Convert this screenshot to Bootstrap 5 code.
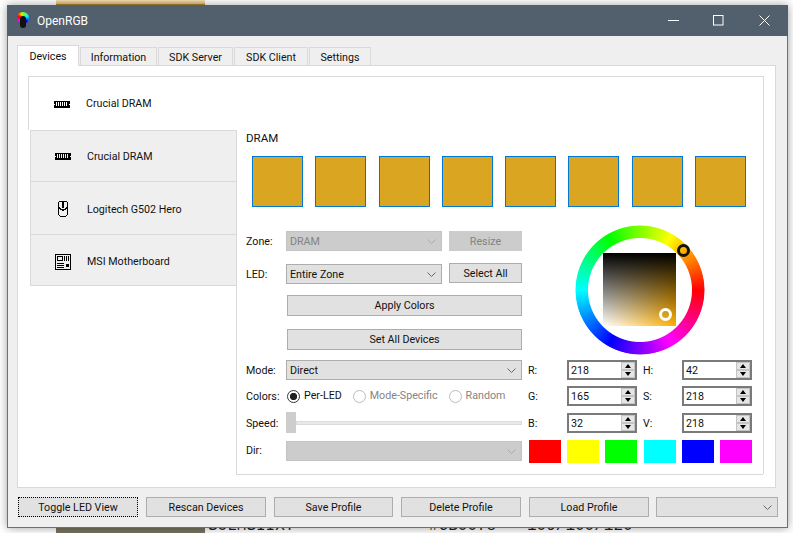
<!DOCTYPE html>
<html lang="en">
<head>
<meta charset="utf-8">
<title>OpenRGB</title>
<link href="https://cdn.jsdelivr.net/npm/bootstrap@5.3.0/dist/css/bootstrap.min.css" rel="stylesheet">
<style>
html,body{margin:0;height:100%;background:#fff;overflow:hidden}
body{font-family:Roboto,"Open Sans",sans-serif;font-size:10.7px;line-height:16px;color:#111}
.desk{position:relative;width:793px;height:533px;overflow:hidden;background:#fff}
.strip-top{position:absolute;left:56px;top:0;width:149px;height:5px;background:linear-gradient(#f6e3bd,#eac27a 70%,#97700f)}
.strip-bot{position:absolute;left:56px;top:527px;width:149px;height:6px;background:#77735f}
.behind{position:absolute;top:517px;font-family:"Liberation Mono",monospace;font-size:16px;line-height:18px;color:#222;white-space:nowrap}
.appwin{position:absolute;left:7px;top:5px;width:781px;height:523px;background:#efefef;border:1px solid #66727e;border-top:0;box-shadow:0 0 9px rgba(0,0,0,.38)}
.tbar{height:31px;background:#525f6d;color:#fff;font-size:12px;padding-left:9px;padding-right:1px;margin:0 -1px 0 -1px}
.logo{width:14px;height:17px;position:relative;margin-right:7px}
.logo-wheel{display:block;width:12px;height:12px;border-radius:50%;margin:0 1px;background:conic-gradient(#8f0 0,#0ff 70deg,#00f 130deg,#222 180deg,#f0f 230deg,#f00 290deg,#fd0 340deg,#8f0)}
.logo-dot{position:absolute;left:4px;top:4px;width:6px;height:12px;border-radius:3px;background:#111}
.wbtn{width:45px;height:31px}
.wbtn:last-child{width:46px}
.wbtn svg{display:block}
.appbody{padding:9px 11px 0 9px}
.tabrow{height:20px;flex-wrap:nowrap;border:0;gap:1px;position:relative;z-index:1;align-items:flex-end}
.tabrow .nav-link{height:18px;padding:0;border:1px solid #d9d9d9;border-bottom:0;border-radius:0;background:#efefef;color:#111;font-size:10.7px;line-height:20px;text-align:center;margin:0}
.tabrow .nav-link.active{height:21px;margin-bottom:-1px;background:#fff;color:#111;border-color:#d9d9d9;line-height:21px}
.t1{width:62px}.t2{width:77px}.t3{width:75px}.t4{width:74px}.t5{width:62px}
.pane{height:423px;width:759px;background:#fff;border:1px solid #d9d9d9;padding:10px 11px 0 10px}
.frame{width:736px;height:398px;border-top:1px solid #d9d9d9}
.devlist{width:208px;flex:none}
.dev{display:flex;align-items:center;background:#efefef;border:1px solid #d9d9d9;border-top:0;border-right:0;margin-left:2px;padding-left:24px}
.dev.on{background:#fff;border:0;border-left:1px solid #d9d9d9;margin-left:0;height:53px;padding-left:25px}
.d2{height:52px;border-top:1px solid #d9d9d9}
.d3{height:53px;padding-top:2px}
.d4{height:51px;padding-top:3px}
.dev svg{flex:none;width:16px;height:16px;shape-rendering:crispEdges}
.devname{margin-left:16px;white-space:nowrap;line-height:18px;padding-top:1px}
.mainc{width:528px;flex:none;padding-top:53px;border-right:1px solid #d9d9d9}
.zpanel{height:345px;border-left:1px solid #d9d9d9;border-bottom:1px solid #d9d9d9;padding:0 10px 0 9px}
.zlabel{height:26px;line-height:16px;font-size:11.5px}
.ledrow{display:flex;justify-content:space-between;padding:0 0 0 6px;height:51px;width:500px}
.ledbox{width:51px;height:51px;background:#daa520;border:1px solid #0078d7}
.upper{margin-top:24px;height:129px}
.ctlgrid{display:grid;grid-template-columns:40px 156px 80px;grid-template-rows:33px 31px 34px 21px;align-items:start;width:276px}
.ctlgrid .wd{margin-left:7px}
.sel.form-select{height:20px;min-height:0;padding:2px 0 0 3px;border:1px solid #adadad;border-radius:0;background-color:#e1e1e1;font-size:10.7px;line-height:16px;color:#111;background-size:9px 5px;background-position:right 5px center;background-image:url("data:image/svg+xml,%3Csvg xmlns='http://www.w3.org/2000/svg' viewBox='0 0 9 5'%3E%3Cpath d='M.5.5l4 4 4-4' fill='none' stroke='%23666'/%3E%3C/svg%3E")}
.sel.form-select:disabled{background-color:#ccc;color:#838383;border-color:#c4c4c4;opacity:1;background-image:url("data:image/svg+xml,%3Csvg xmlns='http://www.w3.org/2000/svg' viewBox='0 0 9 5'%3E%3Cpath d='M.5.5l4 4 4-4' fill='none' stroke='%23aaa'/%3E%3C/svg%3E")}
.wb.btn{height:21px;padding:1px 0 0;border:1px solid #adadad;border-radius:0;background:#e1e1e1;color:#111;font-size:10.7px;line-height:18px;--bs-btn-disabled-opacity:1}
.wb.btn:disabled{background:#ccc;color:#838383;border-color:#ccc}
.wb.foc{border:1px dotted #000}
.wb.h20{height:20px;line-height:17px}
.wb.ap{grid-column:2/4;margin-left:1px}
.lb{line-height:22px}
.up1{margin-top:-1px}
.wheelbox{position:relative;width:130px;height:130px;margin-left:53px;margin-top:-6px;flex:none}
.wring{position:absolute;inset:0;border-radius:50%;background:conic-gradient(from 90deg,#f00,#f0f,#00f,#0ff,#0f0,#ff0,#f00);-webkit-mask:radial-gradient(circle,transparent 51.5px,#000 52.5px,#000 64px,transparent 65px);mask:radial-gradient(circle,transparent 51.5px,#000 52.5px,#000 64px,transparent 65px)}
.wsq{position:absolute;left:28px;top:28px;width:73px;height:73px;background:linear-gradient(to bottom,#000,rgba(0,0,0,0)),linear-gradient(to right,#fff,#ffb000)}
.hd{position:absolute;width:13px;height:13px;border-radius:50%;border:3px solid #111}
.hd1{left:102px;top:19px}
.hd2{left:84px;top:83px;border-color:#fff}
.lower{display:grid;grid-template-columns:40px 236px 45px 70px 45px 70px;grid-template-rows:26px 27px 27px 23px;align-items:start;width:506px}
.rgbl{padding-left:6px;line-height:22px}
.spin{display:flex;height:20px;border:2px solid #7a7a7a;background:#fff}
.spin input{flex:1;width:0;border:0;padding:2px 0 0 2px;font:inherit;color:#111;background:transparent;outline:0}
.spbtns{width:14px;display:flex;flex-direction:column;gap:0}
.spb{flex:1;background:#e6e6e6;border:1px solid #c4c4c4;display:flex;align-items:center;justify-content:center}
.up{width:0;height:0;border:3.5px solid transparent;border-top:0;border-bottom:4px solid #000}
.dn{width:0;height:0;border:3.5px solid transparent;border-bottom:0;border-top:4px solid #000}
.form-check-input.rad{width:13px;height:13px;margin:0;flex:none;border:1px solid #333;background:#fff;opacity:1;box-shadow:none}
.form-check-input.rad:checked{background:radial-gradient(circle,#222 3.3px,#fff 4px);border-color:#333}
.form-check-input.rad:disabled{border-color:#bbb;opacity:1}
.radrow{height:20px;padding-left:1px}
.rl{margin:0 11px 0 4px;white-space:nowrap;line-height:18px}
.rl.dis{color:#848484}
.sliderrow{height:21px;margin-top:-1px}
.track{flex:1;height:4px;background:#e9e9e9;border:1px solid #dcdcdc}
.thumb{width:10px;height:21px;background:#cdcdcd;flex:none}
.dirsel{margin-top:1px}
.swatches{grid-column:3/7;display:flex;justify-content:space-between;padding-left:7px;height:23px}
.sw{height:23px;width:32px}
.sw-r{background:#f00}.sw-y{background:#ff0}.sw-g{background:#0f0}.sw-c{background:#0ff}.sw-b{background:#00f}.sw-m{background:#f0f}
.foot{margin-top:9px;height:21px;width:760px;gap:8px;padding-left:1px}
.foot .wb.btn{width:120px;height:20px;line-height:17px;flex:none}
.foot .wb.btn.nar{width:119px}
.foot .sel.form-select{width:122px;margin-left:-1px;flex:none}
.b1{left:208px}.b2{left:429px}.b3{left:527px}
</style>
</head>
<body>
<div class="desk">
  <div class="strip-top"></div>
  <div class="strip-bot"></div>
  <div class="behind b1">SOLMSIIXY</div>
  <div class="behind b2">#6B0078</div>
  <div class="behind b3">109/100/120</div>

  <div class="appwin">
    <div class="tbar d-flex align-items-center">
      <div class="logo"><span class="logo-wheel"></span><span class="logo-dot"></span></div>
      <span class="flex-grow-1">OpenRGB</span>
      <div class="wbtn d-flex align-items-center justify-content-center"><svg width="11" height="11" viewBox="0 0 11 11"><path d="M0 5.500h11" stroke="#fff" fill="none"/></svg></div>
      <div class="wbtn d-flex align-items-center justify-content-center"><svg width="11" height="11" viewBox="0 0 11 11"><rect x=".5" y=".5" width="9.500" height="9.500" stroke="#fff" fill="none"/></svg></div>
      <div class="wbtn d-flex align-items-center justify-content-center"><svg width="11" height="11" viewBox="0 0 11 11"><path d="M.5.5l10 10M10.500.5l-10 10" stroke="#fff" fill="none"/></svg></div>
    </div>
    <div class="appbody">
      <ul class="nav nav-tabs tabrow">
        <li class="nav-item"><a class="nav-link active t1">Devices</a></li>
        <li class="nav-item"><a class="nav-link t2">Information</a></li>
        <li class="nav-item"><a class="nav-link t3">SDK Server</a></li>
        <li class="nav-item"><a class="nav-link t4">SDK Client</a></li>
        <li class="nav-item"><a class="nav-link t5">Settings</a></li>
      </ul>
      <div class="pane">
        <div class="frame d-flex">
          <div class="devlist">
            <div class="dev on"><svg viewBox="0 0 16 16"><path d="M0 5.500H16M0 10.500H16M0 11.500H16M.5 5.500v2M15.500 5.500v2M.5 9v2M15.500 9v2M1.500 6v4M3.500 6v4M5.500 6v4M7.500 6v4M9.500 6v4M11.500 6v4M13.500 6v4M14.500 6v4" stroke="#000" fill="none"/></svg><span class="devname">Crucial DRAM</span></div>
            <div class="dev d2"><svg viewBox="0 0 16 16"><path d="M0 5.500H16M0 10.500H16M0 11.500H16M.5 5.500v2M15.500 5.500v2M.5 9v2M15.500 9v2M1.500 6v4M3.500 6v4M5.500 6v4M7.500 6v4M9.500 6v4M11.500 6v4M13.500 6v4M14.500 6v4" stroke="#000" fill="none"/></svg><span class="devname">Crucial DRAM</span></div>
            <div class="dev d3"><svg viewBox="0 0 16 16"><path d="M3.500 2.500Q3.500.5 5.500.5h5q2 0 2 2v9q0 4-3 4h-3q-3 0-3-4z" fill="none" stroke="#000"/><path d="M3.500 6.500L7 9h2l3.500-2.500M8 1v6" fill="none" stroke="#000" stroke-width="1.300"/></svg><span class="devname">Logitech G502 Hero</span></div>
            <div class="dev d4"><svg viewBox="0 0 16 16"><rect x=".5" y=".5" width="15" height="15" fill="none" stroke="#000"/><rect x="2.500" y="2.500" width="5" height="4" fill="none" stroke="#000"/><path d="M9.500 2v5M11.500 2v5M13.500 2v5M2 9.500h7M2 11.500h7M2 13.500h7" fill="none" stroke="#000"/><rect x="11" y="10" width="3" height="3" fill="#000"/></svg><span class="devname">MSI Motherboard</span></div>
          </div>
          <div class="mainc">
            <div class="zpanel">
              <div class="zlabel">DRAM</div>
              <div class="ledrow">
                <div class="ledbox"></div><div class="ledbox"></div><div class="ledbox"></div><div class="ledbox"></div><div class="ledbox"></div><div class="ledbox"></div><div class="ledbox"></div><div class="ledbox"></div>
              </div>
              <div class="upper d-flex">
                <div class="ctlgrid">
                  <div class="lb">Zone:</div>
                  <select class="form-select sel" disabled><option>DRAM</option></select>
                  <button class="btn wb wd h20" disabled>Resize</button>
                  <div class="lb">LED:</div>
                  <select class="form-select sel"><option>Entire Zone</option></select>
                  <button class="btn wb wd h20 up1">Select All</button>
                  <button class="btn wb ap">Apply Colors</button>
                  <button class="btn wb ap">Set All Devices</button>
                </div>
                <div class="wheelbox">
                  <div class="wring"></div>
                  <div class="wsq"></div>
                  <div class="hd hd1"></div>
                  <div class="hd hd2"></div>
                </div>
              </div>
              <div class="lower">
                <div class="lb">Mode:</div>
                <select class="form-select sel"><option>Direct</option></select>
                <div class="rgbl">R:</div>
                <div class="spin"><input type="text" value="218"><div class="spbtns"><div class="spb"><i class="up"></i></div><div class="spb"><i class="dn"></i></div></div></div>
                <div class="rgbl">H:</div>
                <div class="spin"><input type="text" value="42"><div class="spbtns"><div class="spb"><i class="up"></i></div><div class="spb"><i class="dn"></i></div></div></div>

                <div class="lb">Colors:</div>
                <div class="radrow d-flex align-items-center">
                  <input class="form-check-input rad" type="radio" checked><span class="rl">Per-LED</span>
                  <input class="form-check-input rad" type="radio" disabled><span class="rl dis">Mode-Specific</span>
                  <input class="form-check-input rad" type="radio" disabled><span class="rl dis">Random</span>
                </div>
                <div class="rgbl">G:</div>
                <div class="spin"><input type="text" value="165"><div class="spbtns"><div class="spb"><i class="up"></i></div><div class="spb"><i class="dn"></i></div></div></div>
                <div class="rgbl">S:</div>
                <div class="spin"><input type="text" value="218"><div class="spbtns"><div class="spb"><i class="up"></i></div><div class="spb"><i class="dn"></i></div></div></div>

                <div class="lb">Speed:</div>
                <div class="sliderrow d-flex align-items-center"><div class="thumb"></div><div class="track"></div></div>
                <div class="rgbl">B:</div>
                <div class="spin"><input type="text" value="32"><div class="spbtns"><div class="spb"><i class="up"></i></div><div class="spb"><i class="dn"></i></div></div></div>
                <div class="rgbl">V:</div>
                <div class="spin"><input type="text" value="218"><div class="spbtns"><div class="spb"><i class="up"></i></div><div class="spb"><i class="dn"></i></div></div></div>

                <div class="lb">Dir:</div>
                <select class="form-select sel dirsel" disabled><option></option></select>
                <div class="swatches">
                  <div class="sw sw-r"></div><div class="sw sw-y"></div><div class="sw sw-g"></div><div class="sw sw-c"></div><div class="sw sw-b"></div><div class="sw sw-m"></div>
                </div>
              </div>
            </div>
          </div>
        </div>
      </div>
      <div class="foot d-flex">
        <button class="btn wb foc">Toggle LED View</button>
        <button class="btn wb">Rescan Devices</button>
        <button class="btn wb nar">Save Profile</button>
        <button class="btn wb">Delete Profile</button>
        <button class="btn wb">Load Profile</button>
        <select class="form-select sel"><option></option></select>
      </div>
    </div>
  </div>
</div>
<script src="https://cdn.jsdelivr.net/npm/bootstrap@5.3.0/dist/js/bootstrap.bundle.min.js"></script>
</body>
</html>
